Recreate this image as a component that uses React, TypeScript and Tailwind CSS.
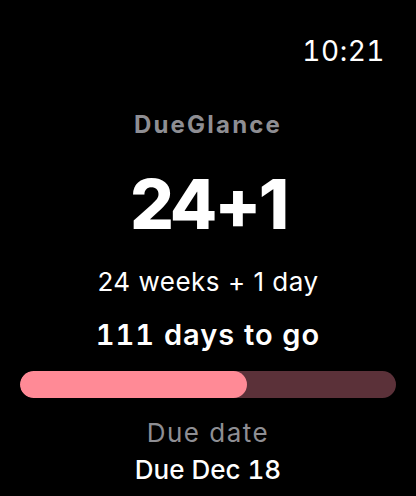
import React from "react";

export default function App() {
  const progress = 60.4;
  return (
    <div
      className="w-[416px] h-[496px] bg-black text-white overflow-hidden flex flex-col"
      style={{ fontFamily: "Inter, 'Noto Sans', sans-serif" }}
    >
      <div className="flex justify-end pr-[31px] pt-[37px]">
        <span className="text-[28px] leading-none font-normal tabular-nums tracking-[0.5px]">10:21</span>
      </div>
      <div className="mt-[48px] text-center text-[24px] leading-none font-bold tracking-[2.2px] text-[#8e8e93]">
        DueGlance
      </div>
      <div className="mt-[33px] text-center text-[69px] leading-none font-extrabold tracking-[-3px]">
        24+1
      </div>
      <div className="mt-[30px] text-center text-[26px] leading-none font-normal tracking-[0.5px]">
        24 weeks + 1 day
      </div>
      <div className="mt-[25px] text-center text-[29px] leading-none font-semibold tabular-nums tracking-[1px]">
        111 days to go
      </div>
      <div className="mt-[22px] mx-[20px] h-[27px] rounded-full bg-[#5b3139] overflow-hidden">
        <div className="h-full rounded-full bg-[#ff8a96]" style={{ width: `${progress}%` }} />
      </div>
      <div className="mt-[22px] text-center text-[26px] leading-none font-normal tracking-[1.5px] text-[#8e8e93]">
        Due date
      </div>
      <div className="mt-[11px] text-center text-[26px] leading-none font-medium tabular-nums">
        Due Dec 18
      </div>
    </div>
  );
}
